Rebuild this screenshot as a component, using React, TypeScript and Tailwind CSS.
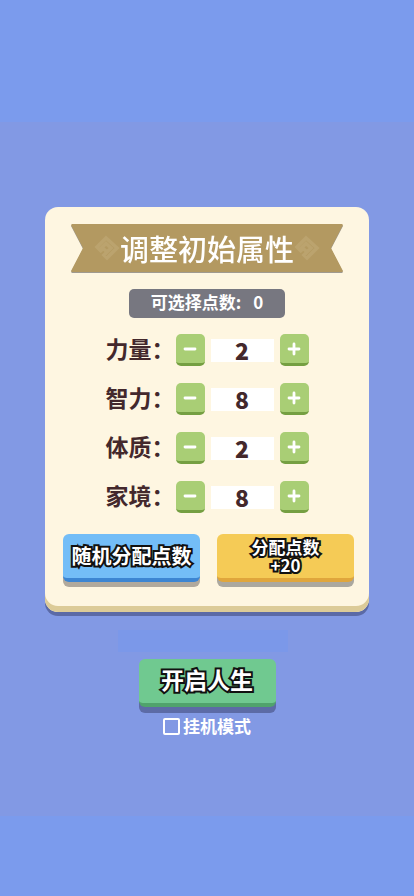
import { useState } from "react";

type Stat = { id: string; name: string; value: number };

const initialStats: Stat[] = [
  { id: "strength", name: "力量", value: 2 },
  { id: "intellect", name: "智力", value: 8 },
  { id: "physique", name: "体质", value: 2 },
  { id: "family", name: "家境", value: 8 },
];

const outlined =
  "font-bold text-white [-webkit-text-stroke:4px_#111111] [paint-order:stroke_fill] [stroke-linejoin:round]";

function Knot() {
  return (
    <svg viewBox="0 0 26 26" className="h-[26px] w-[26px]" fill="none" stroke="#bba36e" strokeWidth="3.6" aria-hidden="true">
      <path d="M8 17 L3 12 L12 3 L23 13 L13 23 L10 20 L17 13 L12 8.500 L8 12.500 L12 16" />
    </svg>
  );
}

function StepButton({ label, plus, onClick }: { label: string; plus?: boolean; onClick: () => void }) {
  return (
    <button
      type="button"
      aria-label={label}
      onClick={onClick}
      className="flex h-8 w-[29px] items-center justify-center rounded-[5px] border-b-[3px] border-[#759f42] bg-[#a9ce75]"
    >
      <svg viewBox="0 0 14 14" className="h-3.5 w-3.5" stroke="white" strokeWidth="2.8" strokeLinecap="round" aria-hidden="true">
        <path d={plus ? "M2 7H12M7 2V12" : "M2 7H12"} />
      </svg>
    </button>
  );
}

export default function App() {
  const [stats, setStats] = useState(initialStats);
  const [points, setPoints] = useState(0);

  const change = (id: string, step: number) => {
    const stat = stats.find((s) => s.id === id);
    if (!stat || points - step < 0 || stat.value + step < 0) return;
    setPoints(points - step);
    setStats(stats.map((s) => (s.id === id ? { ...s, value: s.value + step } : s)));
  };

  return (
    <div className="flex min-h-screen flex-col bg-[#7b9bed] pt-[122px] pb-20 font-['Noto_Sans_CJK_SC',sans-serif]">
      <main className="flex flex-1 flex-col items-center bg-[#8299e4] px-[45px] pt-[85px]">
        <section className="w-full max-w-[324px] rounded-[13px] bg-[#fef6e1] px-[18px] pt-[17px] pb-[30px] shadow-[inset_0_-6px_0_#dccb98,0_4px_0_#5b6aa6]">
          <div className="mx-2 drop-shadow-[0_1px_0_#9f9a90]">
            <h1 className="flex h-12 items-center justify-center bg-[#b39961] text-[29px] leading-[48px] font-medium whitespace-nowrap text-white [clip-path:polygon(0_1px,1px_0,calc(100%-1px)_0,100%_1px,calc(100%-12px)_50%,100%_calc(100%-1px),calc(100%-1px)_100%,1px_100%,0_calc(100%-1px),12px_50%)]">
              <Knot />
              调整初始属性
              <Knot />
            </h1>
          </div>

          <p className="mx-auto mt-[17px] flex h-[29px] w-[156px] items-center justify-center gap-3 rounded-[5px] bg-[#777780] pb-1 text-[17px] leading-6 font-bold text-white">
            <span>可选择点数:</span>
            <span>{points}</span>
          </p>

          <div className="mt-4 flex flex-col items-center gap-[17px]">
            {stats.map((s) => (
              <div key={s.id} className="flex h-8 items-center">
                <label htmlFor={s.id} className="w-[70px] pb-1 text-[23px] leading-7 font-bold whitespace-nowrap text-[#43282c]">
                  {s.name}：
                </label>
                <StepButton label={`${s.name} -1`} onClick={() => change(s.id, -1)} />
                <input
                  id={s.id}
                  readOnly
                  value={s.value}
                  className="mx-[6px] h-[23px] w-[63px] bg-white text-center text-[23px] leading-[23px] font-black text-[#43282c] outline-none"
                />
                <StepButton plus label={`${s.name} +1`} onClick={() => change(s.id, 1)} />
              </div>
            ))}
          </div>

          <div className="mt-[21px] -mr-[3px] grid grid-cols-2 gap-[17px]">
            <button
              type="button"
              className={`h-12 rounded-[6px] border-b-4 border-[#3c85d2] bg-[#73bdf7] text-xl leading-6 whitespace-nowrap shadow-[0_5px_0_#b1a99c] ${outlined}`}
            >
              随机分配点数
            </button>
            <button
              type="button"
              className={`h-12 rounded-[6px] border-b-4 border-[#e0a63c] bg-[#f5cb56] text-[17px] leading-[18px] shadow-[0_5px_0_#aba89f] ${outlined}`}
            >
              <span className="block">分配点数</span>
              <span className="block">+20</span>
            </button>
          </div>
        </section>

        <div className="mt-[18px] mr-2 h-[22px] w-[170px] bg-[#7b98e9]" />

        <button
          type="button"
          className={`mt-[7px] h-12 w-[137px] rounded-[6px] border-b-4 border-[#50a36c] bg-[#70c990] pb-1 text-[23px] leading-8 shadow-[0_6px_0_#5c6ba6] ${outlined}`}
        >
          开启人生
        </button>

        <label className="mt-[7px] flex items-center gap-[3px] text-[17px] leading-6 font-bold text-white">
          <input
            type="checkbox"
            className="h-[17px] w-[17px] appearance-none rounded-[2px] border-2 border-white checked:bg-white"
          />
          挂机模式
        </label>
      </main>
    </div>
  );
}
